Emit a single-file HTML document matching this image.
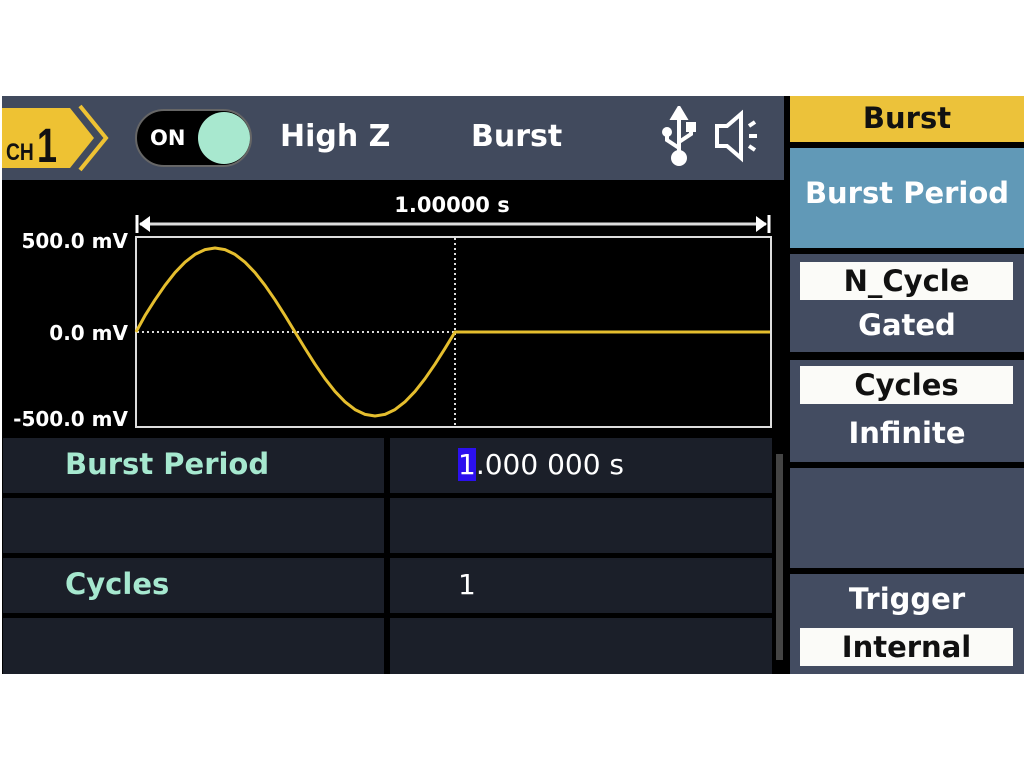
<!DOCTYPE html>
<html><head><meta charset="utf-8"><style>
*{margin:0;padding:0;box-sizing:border-box}
body{width:1024px;height:768px;background:#fff;position:relative;overflow:hidden;font-family:"DejaVu Sans","Liberation Sans",sans-serif;font-weight:bold}
.a{position:absolute}
.cell{position:absolute;background:#1b1f29}
.lbl{color:#a6e8cf;font-size:29px;position:absolute;left:62px;top:9px}
.val{color:#fff;font-size:28px;position:absolute;left:68px;top:10px;font-weight:normal}
.rb{position:absolute;left:790px;width:234px;background:#434c61;text-align:center;color:#fff;font-size:29px}
.box{position:absolute;left:10px;width:213px;height:38px;background:#fbfbf8;color:#111;font-size:29px;line-height:38px}
</style></head><body>
<div class="a" style="left:2px;top:96px;width:1022px;height:578px;background:#000"></div>
<!-- header -->
<div class="a" style="left:2px;top:96px;width:782px;height:84px;background:#414a5d"></div>
<svg class="a" style="left:0;top:100px" width="120" height="76">
<polygon points="2,8 70,8 94,38 70,68 2,68" fill="#eec233"/>
<polyline points="80,6 106,38 80,70" fill="none" stroke="#eec233" stroke-width="4"/>
<text x="0" y="0" transform="translate(6,60) scale(0.8,1)" font-family="Liberation Sans,sans-serif" font-weight="bold" font-size="24" fill="#111">CH</text>
<text x="0" y="0" transform="translate(37,62) scale(0.75,1)" font-family="Liberation Sans,sans-serif" font-weight="bold" font-size="48" fill="#111">1</text>
</svg>
<div class="a" style="left:135px;top:109px;width:117px;height:58px;border-radius:29px;background:#000;border:2px solid #666"></div>
<div class="a" style="left:150px;top:126px;color:#fff;font-size:21px">ON</div>
<div class="a" style="left:198px;top:112px;width:52px;height:52px;border-radius:50%;background:#a8e8cf"></div>
<div class="a" style="left:280px;top:119px;color:#fff;font-size:30px">High Z</div>
<div class="a" style="left:471px;top:119px;color:#fff;font-size:30px">Burst</div>
<svg class="a" style="left:655px;top:106px" width="110" height="64" fill="none" stroke="#fff" stroke-width="4">
<line x1="24" y1="8" x2="24" y2="50"/><polygon points="24,2 18,12 30,12" fill="#fff"/>
<polyline points="24,42 12,34 12,26"/><polyline points="24,36 36,28 36,22"/>
<circle cx="24" cy="52" r="6" fill="#fff"/><circle cx="12" cy="26" r="3" fill="#fff"/><rect x="33" y="18" width="6" height="6" fill="#fff"/>
<polygon points="62,20 72,20 86,8 86,52 72,40 62,40" stroke-width="4"/>
<line x1="94" y1="20" x2="100" y2="16"/><line x1="94" y1="30" x2="102" y2="30"/><line x1="94" y1="40" x2="100" y2="44"/>
</svg>
<!-- plot -->
<svg class="a" style="left:0;top:180px" width="784" height="256">
<text x="452" y="32" fill="#fff" font-size="21" text-anchor="middle" font-family="DejaVu Sans,sans-serif">1.00000 s</text>
<line x1="140" y1="44" x2="766" y2="44" stroke="#ddd" stroke-width="3"/>
<line x1="137" y1="35" x2="137" y2="53" stroke="#fff" stroke-width="3"/><polygon points="139,44 150,36 150,52" fill="#fff"/>
<line x1="769" y1="35" x2="769" y2="53" stroke="#fff" stroke-width="3"/><polygon points="767,44 756,36 756,52" fill="#fff"/>
<rect x="136" y="57" width="635" height="190" fill="none" stroke="#ddd" stroke-width="2"/>
<line x1="137" y1="152" x2="455" y2="152" stroke="#ddd" stroke-width="2" stroke-dasharray="2,3"/>
<line x1="455" y1="58" x2="455" y2="246" stroke="#ddd" stroke-width="2" stroke-dasharray="2,3"/>
<polyline fill="none" stroke="#e5be2e" stroke-width="3" stroke-linejoin="round" points="136,152 145,135.6 155,119.8 165,105.3 175,92.6 185,82.2 195,74.4 205,69.6 215,68 225,69.6 235,74.4 245,82.2 255,92.6 265,105.3 275,119.8 285,135.6 295,152 305,168.4 315,184.2 325,198.7 335,211.4 345,221.8 355,229.6 365,234.4 375,236 385,234.4 395,229.6 405,221.8 415,211.4 425,198.7 435,184.2 445,168.4 455,152 770,152"/>
<g fill="#fff" font-size="20" text-anchor="end" font-family="DejaVu Sans,sans-serif" font-weight="bold">
<text x="128" y="68">500.0 mV</text><text x="128" y="160">0.0 mV</text><text x="128" y="246">-500.0 mV</text></g>
</svg>
<!-- table -->
<div class="cell" style="left:3px;top:438px;width:381px;height:55px"><div class="lbl">Burst Period</div></div>
<div class="cell" style="left:390px;top:438px;width:382px;height:55px"><div class="val"><span style="background:#2c10ee">1</span>.000 000 s</div></div>
<div class="cell" style="left:3px;top:498px;width:381px;height:55px"></div>
<div class="cell" style="left:390px;top:498px;width:382px;height:55px"></div>
<div class="cell" style="left:3px;top:558px;width:381px;height:55px"><div class="lbl">Cycles</div></div>
<div class="cell" style="left:390px;top:558px;width:382px;height:55px"><div class="val">1</div></div>
<div class="cell" style="left:3px;top:618px;width:381px;height:56px"></div>
<div class="cell" style="left:390px;top:618px;width:382px;height:56px"></div>
<div class="a" style="left:776px;top:454px;width:7px;height:206px;background:#444"></div>
<!-- right panel -->
<div class="rb" style="top:96px;height:46px;background:#ecc23a;color:#111;line-height:44px">Burst</div>
<div class="rb" style="top:148px;height:100px;background:#6199b7;line-height:90px">Burst Period</div>
<div class="rb" style="top:254px;height:98px"><div class="box" style="top:8px">N_Cycle</div><div style="position:absolute;top:54px;width:100%">Gated</div></div>
<div class="rb" style="top:360px;height:102px"><div class="box" style="top:6px">Cycles</div><div style="position:absolute;top:56px;width:100%">Infinite</div></div>
<div class="rb" style="top:468px;height:100px"></div>
<div class="rb" style="top:574px;height:100px"><div style="position:absolute;top:8px;width:100%">Trigger</div><div class="box" style="top:54px">Internal</div></div>
</body></html>
